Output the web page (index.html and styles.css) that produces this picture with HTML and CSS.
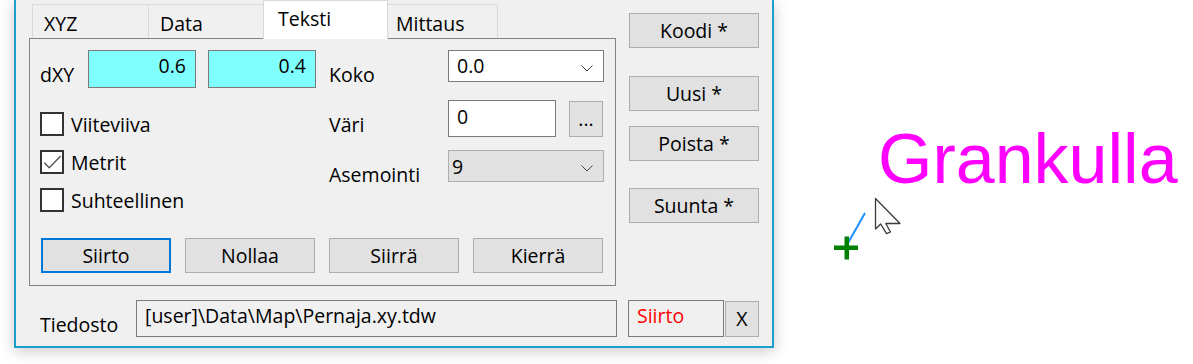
FILE: index.html
```html
<!DOCTYPE html>
<html lang="fi">
<head>
<meta charset="utf-8">
<title>Teksti</title>
<link rel="stylesheet" href="styles.css">
</head>
<body>
<div class="page">
  <div class="dialog">
    <div class="main">
      <div class="left">
        <div class="tabs">
          <div class="tab tab-xyz">XYZ</div>
          <div class="tab tab-data">Data</div>
          <div class="tab tab-teksti active">Teksti</div>
          <div class="tab tab-mittaus">Mittaus</div>
        </div>
        <div class="panel">
          <div class="top">
            <div class="col-left">
              <div class="dxy-row">
                <span class="dxy">dXY</span>
                <div class="num">0.6</div>
                <div class="num">0.4</div>
              </div>
              <div class="checks">
                <div class="check"><span class="box"></span><span>Viiteviiva</span></div>
                <div class="check"><span class="box"><svg class="tick" width="20" height="20" viewBox="0 0 20 20"><polyline points="2.3,10.7 7.3,15.7 18.7,4" fill="none" stroke="#555" stroke-width="1.4"/></svg></span><span>Metrit</span></div>
                <div class="check"><span class="box"></span><span>Suhteellinen</span></div>
              </div>
            </div>
            <div class="col-right">
              <div class="frow">
                <span class="flabel">Koko</span>
                <div class="combo combo-white"><span class="combo-text">0.0</span><svg class="chev" width="12" height="7" viewBox="0 0 12 7"><polyline points="0.5,0.5 6,6 11.5,0.5" fill="none" stroke="#444" stroke-width="1"/></svg></div>
              </div>
              <div class="frow">
                <span class="flabel">Väri</span>
                <div class="text-in">0</div>
                <button class="btn dots">...</button>
              </div>
              <div class="frow">
                <span class="flabel">Asemointi</span>
                <div class="combo combo-gray"><span class="combo-text">9</span><svg class="chev" width="12" height="7" viewBox="0 0 12 7"><polyline points="0.5,0.5 6,6 11.5,0.5" fill="none" stroke="#444" stroke-width="1"/></svg></div>
              </div>
            </div>
          </div>
          <div class="btn-row">
            <button class="btn wide primary">Siirto</button>
            <button class="btn wide">Nollaa</button>
            <button class="btn wide">Siirrä</button>
            <button class="btn wide">Kierrä</button>
          </div>
        </div>
      </div>
      <div class="side">
        <button class="btn wide side-koodi">Koodi *</button>
        <button class="btn wide side-uusi">Uusi *</button>
        <button class="btn wide side-poista">Poista *</button>
        <button class="btn wide side-suunta">Suunta *</button>
      </div>
    </div>
    <div class="bottom">
      <span class="tlabel">Tiedosto</span>
      <div class="path">[user]\Data\Map\Pernaja.xy.tdw</div>
      <div class="status">Siirto</div>
      <button class="btn xbtn">X</button>
    </div>
  </div>
  <div class="canvas">
    <div class="place">Grankulla</div>
    <svg class="overlay" width="419" height="364" viewBox="0 0 419 364">
      <g transform="translate(-774 0)">
        <line x1="865" y1="213" x2="848" y2="243" stroke="#1e8fff" stroke-width="2"/>
        <rect x="834" y="245.5" width="24" height="4.5" fill="#008000"/>
        <rect x="844.5" y="236.5" width="4.5" height="23" fill="#008000"/>
        <polygon points="875.5,198.5 875.5,229 880.7,224 886.5,233.7 890.5,232 885.8,223.5 900,223.5" fill="#fbfbfb" stroke="#3c3c3c" stroke-width="1.3" stroke-linejoin="round"/>
      </g>
    </svg>
  </div>
</div>
</body>
</html>
```
FILE: styles.css
```css
* {
  box-sizing: border-box;
}

html,
body {
  margin: 0;
  background: #ffffff;
}

body {
  width: 1193px;
  height: 364px;
  overflow: hidden;
  font-family: "Open Sans", "Noto Sans", sans-serif;
  font-size: 19.5px;
  line-height: 26px;
  color: #000;
}

.page {
  display: flex;
  height: 364px;
}

.dialog {
  position: relative;
  z-index: 1;
  flex: none;
  margin-left: 14px;
  width: 760px;
  height: 348px;
  background: #f0f0f0;
  border: 2px solid #1ba1c9;
  border-top: none;
  box-shadow: 0 3px 14px rgba(0, 0, 0, 0.22);
}

.main {
  display: flex;
}

.left {
  margin-left: 13px;
  width: 587px;
}

/* tabs */
.tabs {
  display: flex;
  align-items: flex-end;
  height: 38px;
  padding-left: 3px;
}

.tab {
  height: 34px;
  margin-left: -1px;
  padding-top: 6px;
  border: 1px solid #d9d9d9;
  border-bottom: none;
  background: #f0f0f0;
  white-space: nowrap;
}

.tab-xyz {
  width: 117px;
  margin-left: 0;
  padding-left: 11px;
}

.tab-data {
  width: 116px;
  padding-left: 11px;
}

.tab-mittaus {
  width: 111px;
  padding-left: 8px;
}

.tab.active {
  position: relative;
  z-index: 1;
  width: 125px;
  height: 39px;
  margin-bottom: -1px;
  padding-top: 5px;
  padding-left: 14px;
  background: #ffffff;
}

/* panel */
.panel {
  height: 248px;
  padding: 11px 10px 0 10px;
  border: 1px solid #848484;
  background: #f0f0f0;
}

.top {
  display: flex;
  height: 164px;
}

.col-left {
  width: 276px;
}

.dxy-row {
  display: flex;
  height: 38px;
}

.dxy {
  width: 48px;
  align-self: flex-end;
}

.num {
  width: 108px;
  height: 38px;
  padding: 2px 9px 0 0;
  text-align: right;
  background: #80ffff;
  border: 1px solid #7a7a7a;
}

.num + .num {
  margin-left: 12px;
}

.checks {
  display: flex;
  flex-direction: column;
  gap: 12px;
  margin-top: 24px;
}

.check {
  display: flex;
  height: 26px;
}

.box {
  position: relative;
  width: 24px;
  height: 24px;
  margin-right: 7px;
  border: 2px solid #333;
  background: #fff;
}

.tick {
  display: block;
}

.col-right {
  width: 275px;
  margin-left: 13px;
}

.frow {
  display: flex;
  align-items: flex-start;
  height: 50px;
}

.flabel {
  width: 119px;
  margin-top: 12px;
}

.combo {
  display: flex;
  justify-content: space-between;
  align-items: flex-start;
  width: 156px;
  height: 32px;
  border: 1px solid #7a7a7a;
}

.combo-white {
  background: #ffffff;
}

.combo-white .combo-text {
  padding: 2px 0 0 8px;
}

.combo-gray {
  background: #e1e1e1;
  border-color: #adadad;
}

.combo-gray .combo-text {
  padding: 3px 0 0 3px;
}

.chev {
  display: block;
  margin: 14px 10px 0 0;
}

.text-in {
  width: 108px;
  height: 37px;
  padding: 3px 0 0 8px;
  background: #fff;
  border: 1px solid #7a7a7a;
}

/* buttons */
.btn {
  display: flex;
  align-items: center;
  justify-content: center;
  margin: 0;
  padding: 0;
  font: inherit;
  color: #000;
  background: #e1e1e1;
  border: 1px solid #adadad;
  border-radius: 0;
}

.wide {
  width: 130px;
  height: 35px;
}

.primary {
  border: 2px solid #0078d7;
}

.dots {
  width: 34px;
  height: 36px;
  margin: 1px 0 0 13px;
}

.btn-row {
  display: flex;
  gap: 14px;
  margin-top: 24px;
  margin-left: 1px;
}

.side {
  display: flex;
  flex-direction: column;
  width: 130px;
  margin-left: 13px;
  padding-top: 13px;
}

.side-uusi {
  margin-top: 28px;
}

.side-poista {
  margin-top: 15px;
}

.side-suunta {
  margin-top: 27px;
}

/* bottom row */
.bottom {
  display: flex;
  align-items: flex-start;
  margin-top: 14px;
  padding-left: 24px;
}

.tlabel {
  width: 96px;
  margin-top: 12px;
}

.path {
  width: 481px;
  height: 37px;
  padding: 2px 0 0 8px;
  border: 1px solid #7a7a7a;
  white-space: nowrap;
}

.status {
  width: 96px;
  height: 37px;
  margin-left: 11px;
  padding: 2px 0 0 8px;
  color: #ff0000;
  border: 1px solid #7a7a7a;
}

.xbtn {
  width: 34px;
  height: 36px;
  margin: 1px 0 0 1px;
}

/* map canvas */
.canvas {
  position: relative;
  flex: 1;
}

.place {
  position: absolute;
  left: 104px;
  top: 124px;
  font-family: "Liberation Sans", Arial, sans-serif;
  font-size: 70px;
  line-height: 70px;
  color: #ff00ff;
  white-space: nowrap;
}

.overlay {
  position: absolute;
  left: 0;
  top: 0;
}
```
